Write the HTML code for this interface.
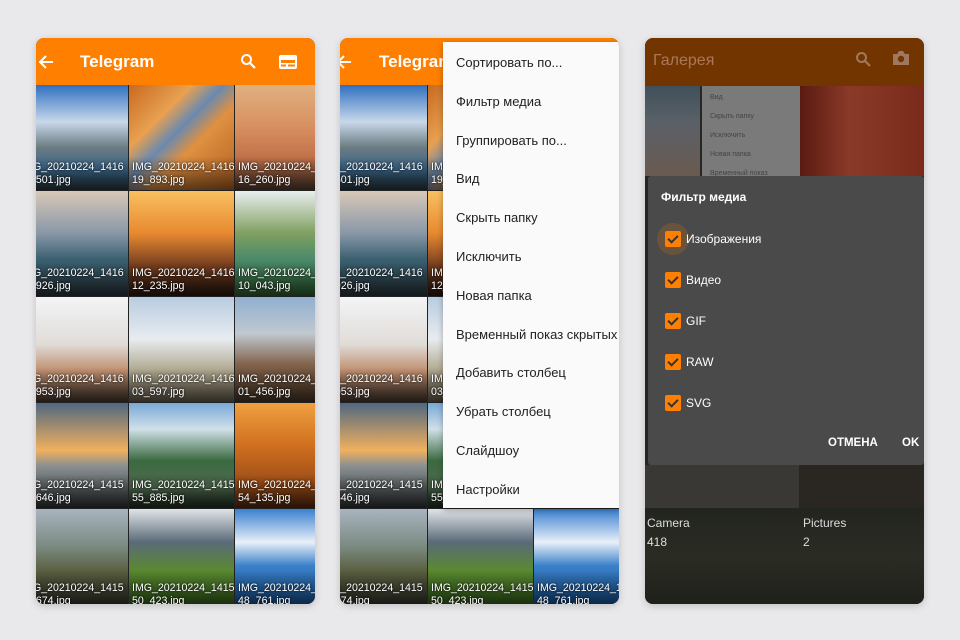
<!DOCTYPE html>
<html><head><meta charset="utf-8">
<style>
*{margin:0;padding:0;box-sizing:border-box}
body{width:960px;height:640px;background:#e9e9eb;position:relative;overflow:hidden;font-family:"Liberation Sans","DejaVu Sans",sans-serif}
.ph{position:absolute;top:38px;width:279px;height:566px;border-radius:8px;overflow:hidden;background:#222;box-shadow:0 2px 8px rgba(0,0,0,.18)}
.hd{position:absolute;left:0;top:0;right:0;height:47px;background:#ff7f00;color:#fff;z-index:5}
.hd .t{position:absolute;left:44px;top:14px;font-size:17px;font-weight:bold}
.tile{position:absolute;overflow:hidden;z-index:1}
.lb{position:absolute;bottom:3px;left:3px;color:#fff;font-size:10.6px;line-height:13px;white-space:nowrap;text-shadow:0 0 2px #000;z-index:2}
.tile:after{content:"";position:absolute;left:0;right:0;bottom:0;height:34px;background:linear-gradient(transparent,rgba(0,0,0,.55))}
.a{background:linear-gradient(#2f6fc0 0%,#c8d8ea 35%,#6a7a80 60%,#3d6a90 80%,#2a3a40)}
.b{background:linear-gradient(135deg,#c86a20,#e8a050 30%,#6a8ab0 45%,#e09040 60%,#b06020)}
.c{background:linear-gradient(#e0b080,#d89060 40%,#c07048 70%,#5a4030)}
.d{background:linear-gradient(#d8c8b8,#8a98a8 40%,#3a6070 65%,#2a3840)}
.e{background:linear-gradient(#f8c060,#e88a30 40%,#7a4020 70%,#2a1a10)}
.f{background:linear-gradient(#e8eef0,#80a060 40%,#4a8a6a 65%,#306030)}
.g{background:linear-gradient(#f4f4f6,#e0dcd8 45%,#c09070 70%,#4a3a30)}
.h{background:linear-gradient(#b8cce0,#e8ecf0 40%,#b0a890 70%,#6a6050)}
.i{background:linear-gradient(#90b0d0,#c0c8d0 35%,#806048 65%,#4a3828)}
.j{background:linear-gradient(#506880,#f0b060 45%,#8a9090 60%,#303438)}
.k{background:linear-gradient(#7aa8d8,#d0e0e8 25%,#3a6a40 55%,#506a50 80%,#203020)}
.l{background:linear-gradient(#f0a040,#d07020 40%,#a05018 75%,#5a2a10)}
.m{background:linear-gradient(#a8b4c0,#7a8a80 40%,#5a6040 65%,#3a3a30)}
.n{background:linear-gradient(#e0e4e8,#5a6a78 35%,#5a8a30 65%,#3a6a20)}
.o{background:linear-gradient(#3a80d0,#e8f0f8 35%,#3a80c8 60%,#1a5aa0)}
.menu{position:absolute;left:103px;top:4px;width:176px;height:466px;background:#fafafa;box-shadow:0 2px 6px rgba(0,0,0,.3);z-index:10;padding-top:2px}
.menu div{height:38.8px;line-height:38.8px;padding-left:13px;font-size:13px;color:#222;white-space:nowrap}
.dlg{position:absolute;left:3px;top:138px;width:276px;height:289px;background:#4a4a4a;border-radius:3px;z-index:10}
.dlg .ti{position:absolute;left:13px;top:14px;font-size:12px;font-weight:bold;color:#fff}
.cb{position:absolute;left:17px;width:16px;height:16px;background:#ff8000;border-radius:2px}
.cb:after{content:"";position:absolute;left:5px;top:2px;width:4px;height:8px;border:solid #333;border-width:0 2px 2px 0;transform:rotate(45deg)}
.cl{position:absolute;left:38px;font-size:12px;color:#fff}
</style></head><body>

<!-- Phone 1 -->
<div class="ph" style="left:36px">
 <div class="tile a" style="left:0;top:47px;width:92px;height:105px"><div class="lb" style="left:-6px">IG_20210224_1416<br>_501.jpg</div></div>
 <div class="tile b" style="left:93px;top:47px;width:105px;height:105px"><div class="lb">IMG_20210224_1416<br>19_893.jpg</div></div>
 <div class="tile c" style="left:199px;top:47px;width:80px;height:105px"><div class="lb">IMG_20210224_1416<br>16_260.jpg</div></div>
 <div class="tile d" style="left:0;top:153px;width:92px;height:105px"><div class="lb" style="left:-6px">IG_20210224_1416<br>_926.jpg</div></div>
 <div class="tile e" style="left:93px;top:153px;width:105px;height:105px"><div class="lb">IMG_20210224_1416<br>12_235.jpg</div></div>
 <div class="tile f" style="left:199px;top:153px;width:80px;height:105px"><div class="lb">IMG_20210224_1416<br>10_043.jpg</div></div>
 <div class="tile g" style="left:0;top:259px;width:92px;height:105px"><div class="lb" style="left:-6px">IG_20210224_1416<br>_953.jpg</div></div>
 <div class="tile h" style="left:93px;top:259px;width:105px;height:105px"><div class="lb">IMG_20210224_1416<br>03_597.jpg</div></div>
 <div class="tile i" style="left:199px;top:259px;width:80px;height:105px"><div class="lb">IMG_20210224_1416<br>01_456.jpg</div></div>
 <div class="tile j" style="left:0;top:365px;width:92px;height:105px"><div class="lb" style="left:-6px">IG_20210224_1415<br>_646.jpg</div></div>
 <div class="tile k" style="left:93px;top:365px;width:105px;height:105px"><div class="lb">IMG_20210224_1415<br>55_885.jpg</div></div>
 <div class="tile l" style="left:199px;top:365px;width:80px;height:105px"><div class="lb">IMG_20210224_1415<br>54_135.jpg</div></div>
 <div class="tile m" style="left:0;top:471px;width:92px;height:95px"><div class="lb" style="left:-6px;bottom:-4px">IG_20210224_1415<br>_674.jpg</div></div>
 <div class="tile n" style="left:93px;top:471px;width:105px;height:95px"><div class="lb" style="bottom:-4px">IMG_20210224_1415<br>50_423.jpg</div></div>
 <div class="tile o" style="left:199px;top:471px;width:80px;height:95px"><div class="lb" style="bottom:-4px">IMG_20210224_1415<br>48_761.jpg</div></div>
 <div class="hd">
  <svg style="position:absolute;left:2px;top:16px" width="16" height="16" viewBox="0 0 16 16"><path d="M15 8H2M8 2L2 8l6 6" stroke="#fff" stroke-width="2" fill="none"/></svg>
  <div class="t">Telegram</div>
  <svg style="position:absolute;left:204px;top:15px" width="16" height="16" viewBox="0 0 16 16"><circle cx="6.5" cy="6.5" r="4.5" stroke="#fff" stroke-width="2" fill="none"/><path d="M10 10l5 5" stroke="#fff" stroke-width="2.2"/></svg>
  <svg style="position:absolute;left:243px;top:17px" width="18" height="14" viewBox="0 0 18 14"><rect x="0" y="0" width="18" height="14" rx="2" fill="#fff"/><rect x="2" y="5" width="14" height="3" fill="#ff7f00"/><rect x="2" y="9.5" width="5" height="2" fill="#ff7f00"/><rect x="9" y="9.5" width="7" height="2" fill="#ff7f00"/></svg>
 </div>
</div>

<!-- Phone 2 -->
<div class="ph" style="left:340px">
 <div class="tile a" style="left:0;top:47px;width:87px;height:105px"><div class="lb" style="left:-11px">IG_20210224_1416<br>_501.jpg</div></div>
 <div class="tile b" style="left:88px;top:47px;width:105px;height:105px"><div class="lb">IMG_20210224_1416<br>19_893.jpg</div></div>
 <div class="tile c" style="left:194px;top:47px;width:85px;height:105px"></div>
 <div class="tile d" style="left:0;top:153px;width:87px;height:105px"><div class="lb" style="left:-11px">IG_20210224_1416<br>_926.jpg</div></div>
 <div class="tile e" style="left:88px;top:153px;width:105px;height:105px"><div class="lb">IMG_20210224_1416<br>12_235.jpg</div></div>
 <div class="tile f" style="left:194px;top:153px;width:85px;height:105px"></div>
 <div class="tile g" style="left:0;top:259px;width:87px;height:105px"><div class="lb" style="left:-11px">IG_20210224_1416<br>_953.jpg</div></div>
 <div class="tile h" style="left:88px;top:259px;width:105px;height:105px"><div class="lb">IMG_20210224_1416<br>03_597.jpg</div></div>
 <div class="tile i" style="left:194px;top:259px;width:85px;height:105px"></div>
 <div class="tile j" style="left:0;top:365px;width:87px;height:105px"><div class="lb" style="left:-11px">IG_20210224_1415<br>_646.jpg</div></div>
 <div class="tile k" style="left:88px;top:365px;width:105px;height:105px"><div class="lb">IMG_20210224_1415<br>55_885.jpg</div></div>
 <div class="tile l" style="left:194px;top:365px;width:85px;height:105px"></div>
 <div class="tile m" style="left:0;top:471px;width:87px;height:95px"><div class="lb" style="left:-11px;bottom:-4px">IG_20210224_1415<br>_674.jpg</div></div>
 <div class="tile n" style="left:88px;top:471px;width:105px;height:95px"><div class="lb" style="bottom:-4px">IMG_20210224_1415<br>50_423.jpg</div></div>
 <div class="tile o" style="left:194px;top:471px;width:85px;height:95px"><div class="lb" style="bottom:-4px">IMG_20210224_1415<br>48_761.jpg</div></div>
 <div class="hd">
  <svg style="position:absolute;left:-4px;top:16px" width="16" height="16" viewBox="0 0 16 16"><path d="M15 8H2M8 2L2 8l6 6" stroke="#fff" stroke-width="2" fill="none"/></svg>
  <div class="t" style="left:39px">Telegram</div>
 </div>
 <div class="menu">
  <div>Сортировать по...</div><div>Фильтр медиа</div><div>Группировать по...</div><div>Вид</div><div>Скрыть папку</div><div>Исключить</div><div>Новая папка</div><div>Временный показ скрытых</div><div>Добавить столбец</div><div>Убрать столбец</div><div>Слайдшоу</div><div>Настройки</div>
 </div>
</div>

<!-- Phone 3 -->
<div class="ph" style="left:645px;background:#262622">
 <div style="position:absolute;left:0;top:48px;width:55px;height:90px;background:linear-gradient(#40505a,#5a6068 40%,#6a5a50)"></div>
 <div style="position:absolute;left:57px;top:48px;width:98px;height:90px;background:#7a7a7a;font-size:7px;color:#444;line-height:19px;padding:2px 8px">Вид<br>Скрыть папку<br>Исключить<br>Новая папка<br>Временный показ скрытых</div>
 <div style="position:absolute;left:155px;top:48px;width:124px;height:90px;background:linear-gradient(90deg,#5a1a12,#8a3a28 40%,#7a2a1a)"></div>
 <div style="position:absolute;left:0;top:427px;width:154px;height:43px;background:#3a3834"></div>
 <div style="position:absolute;left:156px;top:427px;width:123px;height:43px;background:#2a2622"></div>
 <div style="position:absolute;left:0;top:470px;width:279px;height:96px;background:linear-gradient(#22241e,#2a2c24 50%,#1e201a)"></div>
 <div style="position:absolute;left:2px;top:476px;color:#ddd;font-size:12px;line-height:19px">Camera<br>418</div>
 <div style="position:absolute;left:158px;top:476px;color:#ddd;font-size:12px;line-height:19px">Pictures<br>2</div>
 <div class="hd" style="background:#733500;height:48px">
  <div class="t" style="left:8px;font-weight:normal;color:#a87858;font-size:16px">Галерея</div>
  <svg style="position:absolute;left:210px;top:13px" width="16" height="16" viewBox="0 0 16 16"><circle cx="6.5" cy="6.5" r="4.5" stroke="#a07860" stroke-width="2" fill="none"/><path d="M10 10l5 5" stroke="#a07860" stroke-width="2.2"/></svg>
  <svg style="position:absolute;left:247px;top:12px" width="18" height="16" viewBox="0 0 18 16"><path d="M1 4h4l2-3h4l2 3h4v11H1z" fill="#a07860"/><circle cx="9" cy="9" r="3.2" fill="#733500"/></svg>
 </div>
 <div class="dlg">
  <div class="ti">Фильтр медиа</div>
  <div style="position:absolute;left:9px;top:47px;width:32px;height:32px;border-radius:50%;background:rgba(255,128,0,.18)"></div>
  <div class="cb" style="top:55px"></div><div class="cl" style="top:56px">Изображения</div>
  <div class="cb" style="top:96px"></div><div class="cl" style="top:97px">Видео</div>
  <div class="cb" style="top:137px"></div><div class="cl" style="top:138px">GIF</div>
  <div class="cb" style="top:178px"></div><div class="cl" style="top:179px">RAW</div>
  <div class="cb" style="top:219px"></div><div class="cl" style="top:220px">SVG</div>
  <div style="position:absolute;left:180px;top:261px;font-size:11.5px;font-weight:bold;color:#fff">ОТМЕНА</div>
  <div style="position:absolute;left:254px;top:261px;font-size:11.5px;font-weight:bold;color:#fff">OK</div>
 </div>
</div>
</body></html>
